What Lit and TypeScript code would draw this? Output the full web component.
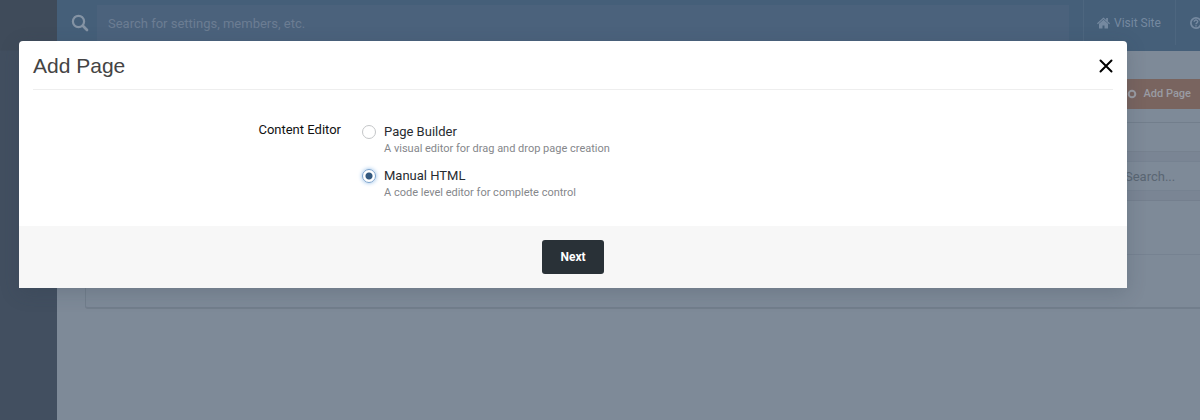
import { LitElement, html, css } from "lit";
import { customElement, state } from "lit/decorators.js";

@customElement("admin-backdrop")
class AdminBackdrop extends LitElement {
  static styles = css`
    :host {
      display: flex;
      min-height: 100vh;
      background: #7e8a98;
      color: #8494a6;
      font: 13px/16px Roboto, sans-serif;
    }
    * { box-sizing: border-box; }
    .side {
      flex: none;
      width: 57px;
      background: linear-gradient(#3f4b5a 50px, #424f60 51px);
    }
    .body { flex: 1; min-width: 0; overflow: hidden; }
    .header {
      display: flex;
      height: 51px;
      background: #455f79;
    }
    .find { flex: 1; display: flex; align-items: center; padding: 5px 14px 10px 14px; }
    .glass { flex: none; width: 18px; height: 18px; margin-right: 8px; color: #8493a4; }
    .find input {
      flex: 1;
      min-width: 0;
      height: 36px;
      padding: 0 11px;
      border: 0;
      background: #4b627c;
      color: #8494a6;
      font: inherit;
      outline: none;
    }
    .find input::placeholder { color: #6b7d93; opacity: 1; }
    .link {
      display: flex;
      align-items: center;
      gap: 4px;
      flex: none;
      width: 92px;
      height: 45px;
      padding: 0 13px;
      border-left: 1px solid #4d667f;
      color: #7589a0;
      font-size: 12px;
      text-decoration: none;
      white-space: nowrap;
    }
    .help { width: 25px; padding: 0 0 0 14px; overflow: hidden; }
    .link svg { flex: none; }
    .actions {
      display: flex;
      justify-content: flex-end;
      height: 71px;
      padding-top: 28px;
    }
    .add {
      display: flex;
      align-items: center;
      gap: 7px;
      height: 30px;
      padding: 0 9px 0 40px;
      border: 0;
      background: #79645f;
      color: #9a9ca3;
      font: 500 11px/16px Roboto, sans-serif;
    }
    .panel {
      margin-left: 28px;
      border: 1px solid #727e8c;
      border-right: 0;
      border-bottom-width: 2px;
      border-radius: 3px 0 0 3px;
    }
    .tabs { height: 29px; border-bottom: 1px solid #76818f; }
    .filter {
      display: flex;
      justify-content: flex-end;
      align-items: center;
      height: 49px;
      background: #7a8594;
      border-bottom: 1px solid #747f8e;
    }
    .filter input {
      width: 90px;
      height: 30px;
      padding: 0 0 0 14px;
      border: 1px solid #768291;
      border-right: 0;
      background: #7e8a98;
      font: inherit;
    }
    .filter input::placeholder { color: #5a6673; opacity: 1; }
    .row { height: 53px; }
    .row + .row { border-top: 1px solid #768291; }
  `;

  render() {
    return html`
      <div class="side"></div>
      <div class="body">
        <div class="header">
          <div class="find">
            <svg class="glass" viewBox="0 0 18 18" fill="none" stroke="currentColor" stroke-width="2.2">
              <circle cx="7.5" cy="7.5" r="5.6" />
              <path d="M11.8 11.8 16 16" stroke-width="2.7" stroke-linecap="round" />
            </svg>
            <input type="text" aria-label="Search" placeholder="Search for settings, members, etc." />
          </div>
          <a class="link" href="#">
            <svg width="13" height="12" viewBox="0 0 13 12" fill="currentColor">
              <path d="M6.5 0.4 9.2 2.9V1h1.7v3.4L13 6.3 12.2 7.2 6.5 2.1 0.8 7.2 0 6.3Z" />
              <path d="M6.5 2.7 11 6.7V11.5H7.5V8.4H5.5V11.5H2V6.7Z" />
            </svg>
            Visit Site
          </a>
          <a class="link help" href="#" aria-label="Help">
            <svg width="12" height="12" viewBox="0 0 12 12" fill="none" stroke="currentColor">
              <circle cx="6" cy="6" r="5.1" stroke-width="1.8" />
              <path d="M4.2 4.8C4.2 2.4 7.8 2.6 7.7 4.7 7.6 5.9 6 5.8 6 7.2M6 8.2V9.4" stroke-width="1.5" />
            </svg>
          </a>
        </div>
        <div class="actions">
          <button class="add" type="button">
            <svg width="10" height="10" viewBox="0 0 10 10" fill="none" stroke="currentColor">
              <circle cx="5" cy="5" r="3.3" stroke-width="2" />
            </svg>
            Add Page
          </button>
        </div>
        <div class="panel">
          <div class="tabs"></div>
          <div class="filter"><input type="text" aria-label="Search pages" placeholder="Search..." /></div>
          <div class="row"></div>
          <div class="row"></div>
        </div>
      </div>
    `;
  }
}

@customElement("add-page-dialog")
class AddPageDialog extends LitElement {
  static styles = css`
    :host {
      display: block;
      overflow: hidden;
      border-radius: 4px 4px 0 0;
      background: #fff;
      box-shadow: 0 5px 20px rgba(40, 55, 70, 0.2);
      color: #272b30;
      font: 13px/16px Roboto, sans-serif;
    }
    * { box-sizing: border-box; }
    .head {
      display: flex;
      align-items: center;
      justify-content: space-between;
      height: 49px;
      margin: 0 14px;
      padding-top: 2px;
      border-bottom: 1px solid #eee;
    }
    .title { margin: 0; color: #444; font: 400 21px/24px "Liberation Sans", sans-serif; }
    .close {
      display: flex;
      width: 14px;
      height: 14px;
      padding: 0;
      border: 0;
      background: none;
      color: #000;
    }
    .fields {
      display: grid;
      grid-template-columns: 308px 1fr;
      column-gap: 21px;
      margin: 0;
      padding: 32px 14px 25px;
      border: 0;
    }
    .label { color: #111; text-align: right; }
    .options { display: grid; gap: 11px; padding-top: 2px; }
    .option { display: flex; align-items: flex-start; gap: 8px; }
    .option input {
      appearance: none;
      flex: none;
      width: 14px;
      height: 14px;
      margin: 1px 0 0;
      border: 1px solid #c4c6c8;
      border-radius: 50%;
      background: #fff;
      outline: none;
    }
    .option input:checked {
      border-color: #7ba2cc;
      background: radial-gradient(circle, #34597f 3px, #fff 4px);
      box-shadow: 0 0 4px #8ab8e6;
    }
    .name { display: block; }
    .hint { display: block; padding-top: 1px; color: #85878b; font-size: 11px; }
    .foot {
      display: flex;
      justify-content: center;
      padding: 14px;
      background: #f7f7f7;
    }
    .next {
      height: 34px;
      padding: 0 18px;
      border: 0;
      border-radius: 3px;
      background: #293137;
      color: #fff;
      font: 700 12px/16px Roboto, sans-serif;
    }
  `;

  @state() private choice = "html";

  private options = [
    { id: "builder", name: "Page Builder", hint: "A visual editor for drag and drop page creation" },
    { id: "html", name: "Manual HTML", hint: "A code level editor for complete control" },
  ];

  render() {
    return html`
      <div class="head">
        <h1 class="title" id="title">Add Page</h1>
        <button class="close" type="button" aria-label="Close">
          <svg width="14" height="14" viewBox="0 0 14 14" fill="none" stroke="currentColor" stroke-width="2" stroke-linecap="round">
            <path d="M1.5 1.5 12.5 12.5M12.5 1.5 1.5 12.5" />
          </svg>
        </button>
      </div>
      <div class="fields" role="radiogroup" aria-labelledby="editor">
        <div class="label" id="editor">Content Editor</div>
        <div class="options">
          ${this.options.map(
            (o) => html`
              <label class="option">
                <input
                  type="radio"
                  name="editor"
                  .checked=${this.choice === o.id}
                  @change=${() => (this.choice = o.id)}
                />
                <span>
                  <span class="name">${o.name}</span>
                  <span class="hint">${o.hint}</span>
                </span>
              </label>
            `
          )}
        </div>
      </div>
      <div class="foot"><button class="next" type="button">Next</button></div>
    `;
  }
}

@customElement("app-root")
class AppRoot extends LitElement {
  static styles = css`
    :host { display: block; position: relative; }
    .dialog { position: absolute; top: 41px; left: 19px; right: 73px; }
  `;

  render() {
    return html`
      <admin-backdrop></admin-backdrop>
      <add-page-dialog class="dialog" role="dialog" aria-label="Add Page"></add-page-dialog>
    `;
  }
}
